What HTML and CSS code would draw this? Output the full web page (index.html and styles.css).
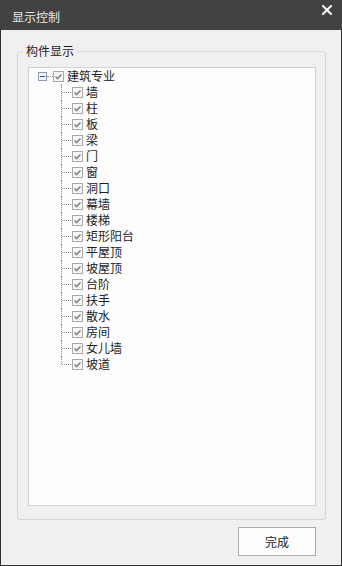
FILE: index.html
```html
<!DOCTYPE html>
<html>
<head>
  <meta charset="utf-8">
  <title>显示控制</title>
  <link rel="stylesheet" href="styles.css">
</head>

<body>
  <div class="dialog">
    <div class="titlebar">
      <span class="title">显示控制</span>
      <button class="btn-close" title="关闭">
        <svg width="10" height="10" viewBox="0 0 10 10">
          <path d="M1 1 L9 9 M9 1 L1 9" stroke="#fff" stroke-width="2" stroke-linecap="square"/>
        </svg>
      </button>
    </div>

    <fieldset class="group">
      <legend class="group-title">构件显示</legend>
      <div class="tree-panel">
        <div class="tree-root">
          <div class="root-row">
            <span class="toggle"></span>
            <span class="stub"></span>
            <span class="check"></span>
            <span class="label">建筑专业</span>
          </div>
          <ul class="children">
            <li class="item"><span class="check"></span><span class="label">墙</span></li>
            <li class="item"><span class="check"></span><span class="label">柱</span></li>
            <li class="item"><span class="check"></span><span class="label">板</span></li>
            <li class="item"><span class="check"></span><span class="label">梁</span></li>
            <li class="item"><span class="check"></span><span class="label">门</span></li>
            <li class="item"><span class="check"></span><span class="label">窗</span></li>
            <li class="item"><span class="check"></span><span class="label">洞口</span></li>
            <li class="item"><span class="check"></span><span class="label">幕墙</span></li>
            <li class="item"><span class="check"></span><span class="label">楼梯</span></li>
            <li class="item"><span class="check"></span><span class="label">矩形阳台</span></li>
            <li class="item"><span class="check"></span><span class="label">平屋顶</span></li>
            <li class="item"><span class="check"></span><span class="label">坡屋顶</span></li>
            <li class="item"><span class="check"></span><span class="label">台阶</span></li>
            <li class="item"><span class="check"></span><span class="label">扶手</span></li>
            <li class="item"><span class="check"></span><span class="label">散水</span></li>
            <li class="item"><span class="check"></span><span class="label">房间</span></li>
            <li class="item"><span class="check"></span><span class="label">女儿墙</span></li>
            <li class="item"><span class="check"></span><span class="label">坡道</span></li>
          </ul>
        </div>
      </div>
    </fieldset>

    <div class="footer">
      <button class="btn-done">完成</button>
    </div>
  </div>
</body>
</html>
```

FILE: styles.css
```css
html, body {
  margin: 0;
  padding: 0;
}

body {
  font-family: "Noto Sans CJK SC", "Liberation Sans", sans-serif;
  font-size: 12px;
  color: #1e1e1e;
  background-color: #f0f0f0;
}

.dialog {
  width: 342px;
  height: 566px;
  box-sizing: border-box;
  background-color: #f0f0f0;
  border: 1px solid #2f2f2f;
  border-top: none;
  display: flex;
  flex-direction: column;
}

/* title bar */
.titlebar {
  height: 30px;
  margin: 0 -1px;
  padding: 0 10px 0 12px;
  background-color: #424242;
  display: flex;
  align-items: center;
  justify-content: space-between;
}

.title {
  color: #e6e6e6;
  font-size: 12px;
  line-height: 14px;
  margin-top: 3px;
}

.btn-close {
  background: none;
  border: none;
  padding: 0;
  width: 10px;
  height: 10px;
  margin-top: -11px;
  display: flex;
}

/* group box */
.group {
  margin: 14px 15px 0 16px;
  padding: 9px 9px 13px 10px;
  border: 1px solid #d6d6d6;
  border-radius: 3px;
}

.group-title {
  margin-left: -5px;
  padding: 0 3px;
  line-height: 14px;
  font-size: 12px;
  color: #1e1e1e;
}

.tree-panel {
  height: 437px;
  background-color: #fdfdfd;
  border: 1px solid #d2d2d2;
  padding: 0 0 0 9px;
}

/* tree */
.root-row {
  height: 16px;
  display: flex;
  align-items: center;
}

.toggle {
  width: 7px;
  height: 7px;
  border: 1px solid #8c9bb4;
  background-color: #f2f4f8;
  position: relative;
}

.toggle::after {
  content: '';
  position: absolute;
  left: 1px;
  top: 3px;
  width: 5px;
  height: 1px;
  background-color: #2d4f95;
}

.stub {
  width: 6px;
  border-top: 1px dotted #8a8a8a;
}

.check {
  width: 11px;
  height: 11px;
  flex-shrink: 0;
  background-image: url("data:image/svg+xml,%3Csvg xmlns='http://www.w3.org/2000/svg' width='11' height='11'%3E%3Crect x='.5' y='.5' width='10' height='10' fill='%23f7f7f7' stroke='%23a9a9a9'/%3E%3Cpath d='M2.5 5.5 L4.5 7.5 L8.5 3.5' fill='none' stroke='%23858585' stroke-width='1.6'/%3E%3C/svg%3E");
}

.label {
  margin-left: 3px;
  line-height: 16px;
  white-space: nowrap;
}

.children {
  list-style: none;
  margin: 0 0 0 23px;
  padding: 0;
}

.item {
  height: 16px;
  position: relative;
  padding-left: 11px;
  display: flex;
  align-items: center;
}

.item::before {
  content: '';
  position: absolute;
  left: 0;
  top: 0;
  bottom: 0;
  border-left: 1px dotted #8a8a8a;
}

.item:last-child::before {
  bottom: 8px;
}

.item::after {
  content: '';
  position: absolute;
  left: 1px;
  top: 8px;
  width: 9px;
  border-top: 1px dotted #8a8a8a;
}

/* footer */
.footer {
  display: flex;
  justify-content: flex-end;
  padding: 7px 25px 0 0;
}

.btn-done {
  width: 78px;
  height: 29px;
  background-color: #fdfdfd;
  border: 1px solid #adadad;
  font-family: "Noto Sans CJK SC", "Liberation Sans", sans-serif;
  font-size: 12px;
  color: #222;
  padding: 0;
  cursor: pointer;
}
```
